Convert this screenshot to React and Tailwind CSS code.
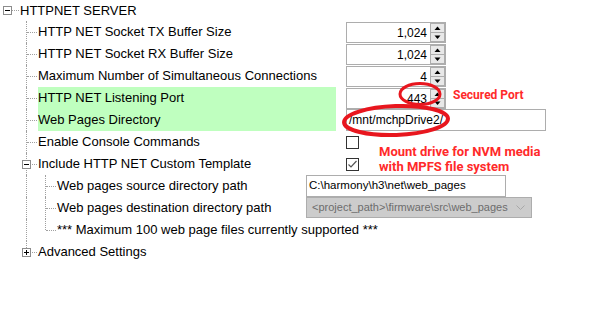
import React from "react";

const DOT = "border-dotted border-[#a0a0a0]";
const VAL = { fontFamily: '"Liberation Sans", Arial, sans-serif' };
const RED = { fontFamily: 'Roboto, "Liberation Sans", Arial, sans-serif' };

function Expander({ plus, className }) {
  return (
    <div className={"absolute w-[9px] h-[9px] border border-[#8c8c8c] bg-white " + className}>
      <div className="absolute left-[1px] top-[3px] w-[5px] h-[1px] bg-black" />
      {plus && <div className="absolute left-[3px] top-[1px] w-[1px] h-[5px] bg-black" />}
    </div>
  );
}

function Spinner({ value }) {
  return (
    <div className="mt-[1px] w-[100px] h-[21px] border border-[#adadad] bg-white flex">
      <div className="flex-1 flex items-center justify-end pr-[3px] text-[12px] text-black" style={VAL}>{value}</div>
      <div className="w-[15px] flex flex-col">
        <div className="flex-1 border border-[#adadad] bg-[#e8e8e8] flex items-center justify-center">
          <svg width="7" height="5" viewBox="0 0 7 5"><path d="M3.5 0.5 L6.5 4 L0.5 4 Z" fill="#000" /></svg>
        </div>
        <div className="flex-1 border border-t-0 border-[#adadad] bg-[#e8e8e8] flex items-center justify-center">
          <svg width="7" height="5" viewBox="0 0 7 5"><path d="M0.5 0.5 L6.5 0.5 L3.5 4 Z" fill="#000" /></svg>
        </div>
      </div>
    </div>
  );
}

function Checkbox({ checked }) {
  return (
    <div className="w-[13px] h-[13px] border border-[#333333] bg-white flex items-center justify-center">
      {checked && (
        <svg width="11" height="11" viewBox="0 0 11 11">
          <path d="M1.5 5.5 L4 8 L9.5 2" stroke="#555" strokeWidth="1.2" fill="none" />
        </svg>
      )}
    </div>
  );
}

function L1Row({ label, green, children, last, expander }) {
  return (
    <div className="relative h-[22px] flex items-center">
      <div className={"absolute left-[26px] top-0 border-l " + DOT + (last ? " h-[7px]" : " h-full")} />
      <div className={"absolute left-[27px] top-[11px] w-[10px] border-t " + DOT} />
      {expander && <Expander plus={expander === "plus"} className="left-[22px] top-[7px]" />}
      <div className={"ml-[38px] w-[298px] h-full flex items-center " + (green ? "bg-[#bfffbf]" : "")}>
        {label}
      </div>
      <div className="ml-[10px] h-full flex items-start">{children}</div>
    </div>
  );
}

function L2Row({ label, children, last }) {
  return (
    <div className="relative h-[22px] flex items-center">
      <div className={"absolute left-[26px] top-0 h-full border-l " + DOT} />
      <div className={"absolute left-[45px] top-0 border-l " + DOT + (last ? " h-[11px]" : " h-full")} />
      <div className={"absolute left-[46px] top-[11px] w-[10px] border-t " + DOT} />
      <div className="ml-[57px] w-[239px] h-full flex items-center whitespace-nowrap">{label}</div>
      <div className="ml-[10px] h-full flex items-start">{children}</div>
    </div>
  );
}

export default function App() {
  return (
    <div
      className="relative w-[593px] h-[314px] bg-white overflow-hidden text-[13px] text-black"
      style={{ fontFamily: '"Liberation Sans", Arial, sans-serif' }}
    >
      <div className="relative h-[21px] flex items-center">
        <Expander className="left-[3px] top-[6px]" />
        <div className={"absolute left-[12px] top-[10px] w-[7px] border-t " + DOT} />
        <div className="ml-[20px]">HTTPNET SERVER</div>
      </div>

      <L1Row label="HTTP NET Socket TX Buffer Size"><Spinner value="1,024" /></L1Row>
      <L1Row label="HTTP NET Socket RX Buffer Size"><Spinner value="1,024" /></L1Row>
      <L1Row label="Maximum Number of Simultaneous Connections"><Spinner value="4" /></L1Row>
      <L1Row label="HTTP NET Listening Port" green>
        <Spinner value="443" />
      </L1Row>
      <L1Row label="Web Pages Directory" green>
        <div className="w-[200px] h-[22px] border border-[#adadad] bg-white flex items-center pl-[2px] text-[12px]" style={VAL}>
          /mnt/mchpDrive2/
        </div>
      </L1Row>
      <L1Row label="Enable Console Commands">
        <div className="pt-[5px]"><Checkbox /></div>
      </L1Row>
      <L1Row label="Include HTTP NET Custom Template" expander="minus">
        <div className="pt-[5px]"><Checkbox checked /></div>
      </L1Row>
      <L2Row label="Web pages source directory path">
        <div className="w-[200px] h-[22px] border border-[#adadad] bg-white flex items-center pl-[2px] text-[11.5px]" style={VAL}>
          C:\harmony\h3\net\web_pages
        </div>
      </L2Row>
      <L2Row label="Web pages destination directory path">
        <div className="w-[226px] h-[21px] border border-[#adadad] bg-[#cccccc] flex items-center pl-[5px] pr-[6px] text-[11px] text-[#6d6d6d]" style={VAL}>
          <span className="flex-1 whitespace-nowrap">&lt;project_path&gt;\firmware\src\web_pages</span>
          <svg className="shrink-0" width="9" height="6" viewBox="0 0 9 6"><path d="M0.5 0.5 L4.5 4.5 L8.5 0.5" stroke="#a8a8a8" fill="none" /></svg>
        </div>
      </L2Row>
      <L2Row label="*** Maximum 100 web page files currently supported ***" last />
      <L1Row label="Advanced Settings" last expander="plus" />

      <div className="absolute left-[453px] top-[88px] text-[12px] font-bold text-[#ff2a2a] leading-[15px]" style={RED}>
        Secured Port
      </div>
      <div className="absolute left-[379px] top-[144px] text-[13px] font-bold text-[#ff2a2a] leading-[15px]" style={RED}>
        <div>Mount drive for NVM media</div>
        <div>with MPFS file system</div>
      </div>
      <svg className="absolute left-0 top-0 pointer-events-none" width="593" height="314">
        <ellipse cx="420" cy="94" rx="20" ry="10.5" stroke="#e8161e" strokeWidth="3" fill="none" />
        <ellipse cx="396" cy="120.5" rx="52" ry="14.5" stroke="#e8161e" strokeWidth="4" fill="none" transform="rotate(-2 396 120.5)" />
      </svg>
    </div>
  );
}
